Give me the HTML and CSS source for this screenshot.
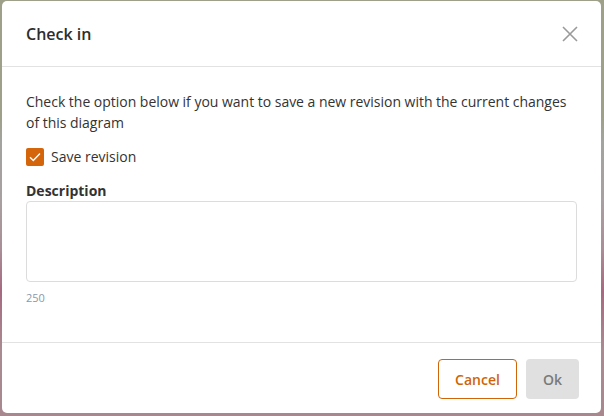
FILE: index.html
```html
<!DOCTYPE html>
<html lang="en">
<head>
    <meta charset="UTF-8">
    <title>Check in</title>
    <link rel="stylesheet" href="styles.css">
</head>
<body>
    <div class="modal">
        <div class="modal-header">
            <h2 class="modal-title">Check in</h2>
            <button class="close-btn" aria-label="Close">
                <svg width="16" height="16" viewBox="0 0 16 16">
                    <path d="M1 1L15 15M15 1L1 15" stroke="#9a9a9a" stroke-width="1.6" fill="none"/>
                </svg>
            </button>
        </div>
        <div class="modal-body">
            <p class="intro">Check the option below if you want to save a new revision with the current changes of this diagram</p>
            <label class="check-row">
                <span class="checkbox">
                    <svg width="12" height="10" viewBox="0 0 12 10">
                        <path d="M1 5.2L4.3 8.4L11 1.6" stroke="#fff" stroke-width="1.4" fill="none"/>
                    </svg>
                </span>
                Save revision
            </label>
            <div class="field-label">Description</div>
            <textarea class="description"></textarea>
            <div class="counter">250</div>
        </div>
        <div class="modal-footer">
            <button class="btn btn-cancel">Cancel</button>
            <button class="btn btn-ok">Ok</button>
        </div>
    </div>
</body>
</html>
```

FILE: styles.css
```css
html, body {
    margin: 0;
    height: 100%;
}
body {
    font-family: "Open Sans", sans-serif;
    color: #333;
    background: linear-gradient(to bottom, #9fa089 0%, #9fa089 28%, #a3a39f 34%, #a8a0a2 48%, #a98e96 60%, #a56a80 70%, #a98b92 84%, #a8888f 100%);
    padding: 1px 3px 3px 2px;
    box-sizing: border-box;
}
.modal {
    background: #fff;
    border-radius: 5px;
    height: 412px;
    display: flex;
    flex-direction: column;
}
.modal-header {
    display: flex;
    align-items: center;
    justify-content: space-between;
    height: 65px;
    padding: 0 23px 0 24px;
    border-bottom: 1px solid #e2e2e2;
}
.modal-title {
    margin: 0;
    font-size: 16px;
    font-weight: 600;
    color: #2d2d2d;
}
.close-btn {
    border: none;
    background: none;
    padding: 0;
    width: 16px;
    height: 16px;
    cursor: pointer;
}
.modal-body {
    padding: 24px 24px 0 24px;
    flex: 1;
}
.intro {
    margin: 0;
    font-size: 14px;
    line-height: 21px;
    letter-spacing: -0.02px;
}
.check-row {
    display: flex;
    align-items: center;
    gap: 7px;
    margin-top: 14px;
    font-size: 14px;
}
.checkbox {
    width: 18px;
    height: 18px;
    background: #d4650b;
    border-radius: 2px;
    display: flex;
    align-items: center;
    justify-content: center;
}
.field-label {
    margin-top: 15px;
    font-size: 14px;
    font-weight: 700;
    color: #333;
}
.description {
    display: block;
    box-sizing: border-box;
    width: 100%;
    height: 81px;
    margin-top: 1px;
    border: 1px solid #dcdcdc;
    border-radius: 4px;
    resize: none;
}
.counter {
    margin-top: 8px;
    font-size: 11px;
    color: #8a98aa;
}
.modal-footer {
    display: flex;
    justify-content: flex-end;
    gap: 9px;
    padding: 16px 22px 14px;
    border-top: 1px solid #e2e2e2;
}
.btn {
    height: 40px;
    border-radius: 4px;
    font-family: "Open Sans", sans-serif;
    font-size: 14px;
    font-weight: 600;
    cursor: pointer;
}
.btn-cancel {
    width: 79px;
    background: #fff;
    border: 1px solid #cf6408;
    color: #cf6408;
}
.btn-ok {
    width: 53px;
    background: #e0e0e0;
    border: none;
    color: #7a7a7a;
}
```
